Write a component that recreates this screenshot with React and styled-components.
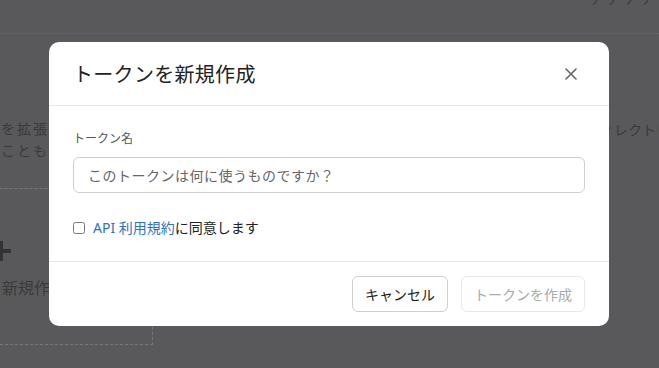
import React from 'react'
import styled, { createGlobalStyle } from 'styled-components'

const GlobalStyle = createGlobalStyle`
    html, body {
        margin: 0;
        padding: 0;
        background: #59595b;
        font-family: "Noto Sans", "Noto Sans CJK JP", sans-serif;
        overflow: hidden;
    }
`

const Page = styled.div`
    width: 659px;
    height: 368px;
    overflow: hidden;
    color: #3a3a3c;
    .topbar {
        height: 33px;
        border-bottom: 1px dotted #6a6a6c;
        display: flex;
        justify-content: flex-end;
        overflow: hidden;
        .kana {
            margin-top: -15px;
            margin-right: 2px;
            font-size: 16px;
            line-height: 24px;
            letter-spacing: 1px;
        }
    }
    .columns {
        display: grid;
        grid-template-columns: 153px 1fr 61px;
    }
    .left {
        overflow: hidden;
    }
    .intro {
        margin-left: -111px;
        padding-top: 84px;
        height: 70px;
        font-size: 14px;
        line-height: 22px;
        border-bottom: 1px dashed #77777a;
        white-space: nowrap;
        letter-spacing: 2px;
    }
    .newcard {
        margin-top: 12px;
        height: 143px;
        border-right: 1px dashed #77777a;
        border-bottom: 1px dashed #77777a;
        display: flex;
        flex-direction: column;
        .plus {
            margin: 38px 0 0 -11px;
            width: 24px;
            height: 24px;
        }
        .label {
            margin: 12px 0 0 2px;
            font-size: 16px;
        }
    }
    .right {
        overflow: hidden;
        white-space: nowrap;
        .dir {
            margin-left: -11px;
            padding-top: 85px;
            font-size: 14px;
        }
    }
`

const Overlay = styled.div`
    position: fixed;
    inset: 0;
    display: flex;
    justify-content: center;
    align-items: flex-start;
    padding-top: 42px;
`

const Modal = styled.div`
    width: 560px;
    margin-left: -1px;
    background: #fff;
    border-radius: 10px;
    color: #222;
`

const Header = styled.div`
    height: 63px;
    padding: 0 24px;
    display: flex;
    align-items: center;
    justify-content: space-between;
    border-bottom: 1px solid #e6e6e6;
    h2 {
        margin: 0;
        font-size: 20px;
        font-weight: 400;
        color: #222;
        letter-spacing: 0.3px;
    }
`

const CloseButton = styled.button`
    border: none;
    background: none;
    padding: 0;
    margin-right: 6px;
    width: 16px;
    height: 16px;
    display: flex;
    align-items: center;
    justify-content: center;
    cursor: pointer;
`

const Body = styled.div`
    padding: 25px 24px 0;
    height: 130px;
    border-bottom: 1px solid #e6e6e6;
    label.title {
        display: block;
        font-size: 12px;
        line-height: 16px;
        color: #555;
        margin-bottom: 10px;
    }
`

const Input = styled.input`
    box-sizing: border-box;
    width: 100%;
    height: 36px;
    border: 1px solid #cfcfcf;
    border-radius: 6px;
    padding: 0 14px;
    font-family: inherit;
    font-size: 14px;
    color: #222;
    letter-spacing: 0.5px;
    &::placeholder {
        color: #666;
    }
`

const Agree = styled.label`
    display: flex;
    align-items: center;
    margin-top: 25px;
    font-size: 14px;
    line-height: 20px;
    color: #222;
    input {
        margin: 0 8px 0 0;
        width: 12px;
        height: 12px;
    }
    a {
        color: #2f6fcf;
        text-decoration: none;
    }
`

const Footer = styled.div`
    height: 64px;
    padding: 0 24px;
    display: flex;
    align-items: center;
    justify-content: flex-end;
    gap: 13px;
`

const Button = styled.button`
    height: 36px;
    padding: 0 12px;
    border-radius: 6px;
    background: #fff;
    font-family: inherit;
    font-size: 14px;
    border: 1px solid ${(p) => (p.disabled ? '#e8e8e8' : '#cfcfcf')};
    color: ${(p) => (p.disabled ? '#aaa' : '#222')};
    cursor: ${(p) => (p.disabled ? 'default' : 'pointer')};
`

const App = () => {
    return (
        <>
            <GlobalStyle />
            <Page>
                <div className="topbar">
                    <span className="kana">ァァァァ</span>
                </div>
                <div className="columns">
                    <div className="left">
                        <div className="intro">
                            ここではアプリを拡張する
                            <br />
                            ブラウザですることもできます
                        </div>
                        <div className="newcard">
                            <svg className="plus" viewBox="0 0 24 24">
                                <path
                                    d="M12 2 V22 M2 12 H22"
                                    stroke="#333335"
                                    strokeWidth="4"
                                />
                            </svg>
                            <span className="label">新規作成</span>
                        </div>
                    </div>
                    <div />
                    <div className="right">
                        <div className="dir">ディレクトリ</div>
                    </div>
                </div>
            </Page>
            <Overlay>
                <Modal>
                    <Header>
                        <h2>トークンを新規作成</h2>
                        <CloseButton type="button" aria-label="閉じる">
                            <svg width="12" height="12" viewBox="0 0 12 12">
                                <path
                                    d="M1 1 L11 11 M11 1 L1 11"
                                    stroke="#666"
                                    strokeWidth="1.6"
                                    strokeLinecap="round"
                                />
                            </svg>
                        </CloseButton>
                    </Header>
                    <Body>
                        <label className="title" htmlFor="token-name">
                            トークン名
                        </label>
                        <Input
                            id="token-name"
                            placeholder="このトークンは何に使うものですか？"
                        />
                        <Agree>
                            <input type="checkbox" />
                            <a href="#terms">API 利用規約</a>に同意します
                        </Agree>
                    </Body>
                    <Footer>
                        <Button type="button">キャンセル</Button>
                        <Button type="button" disabled>
                            トークンを作成
                        </Button>
                    </Footer>
                </Modal>
            </Overlay>
        </>
    )
}

export default App
